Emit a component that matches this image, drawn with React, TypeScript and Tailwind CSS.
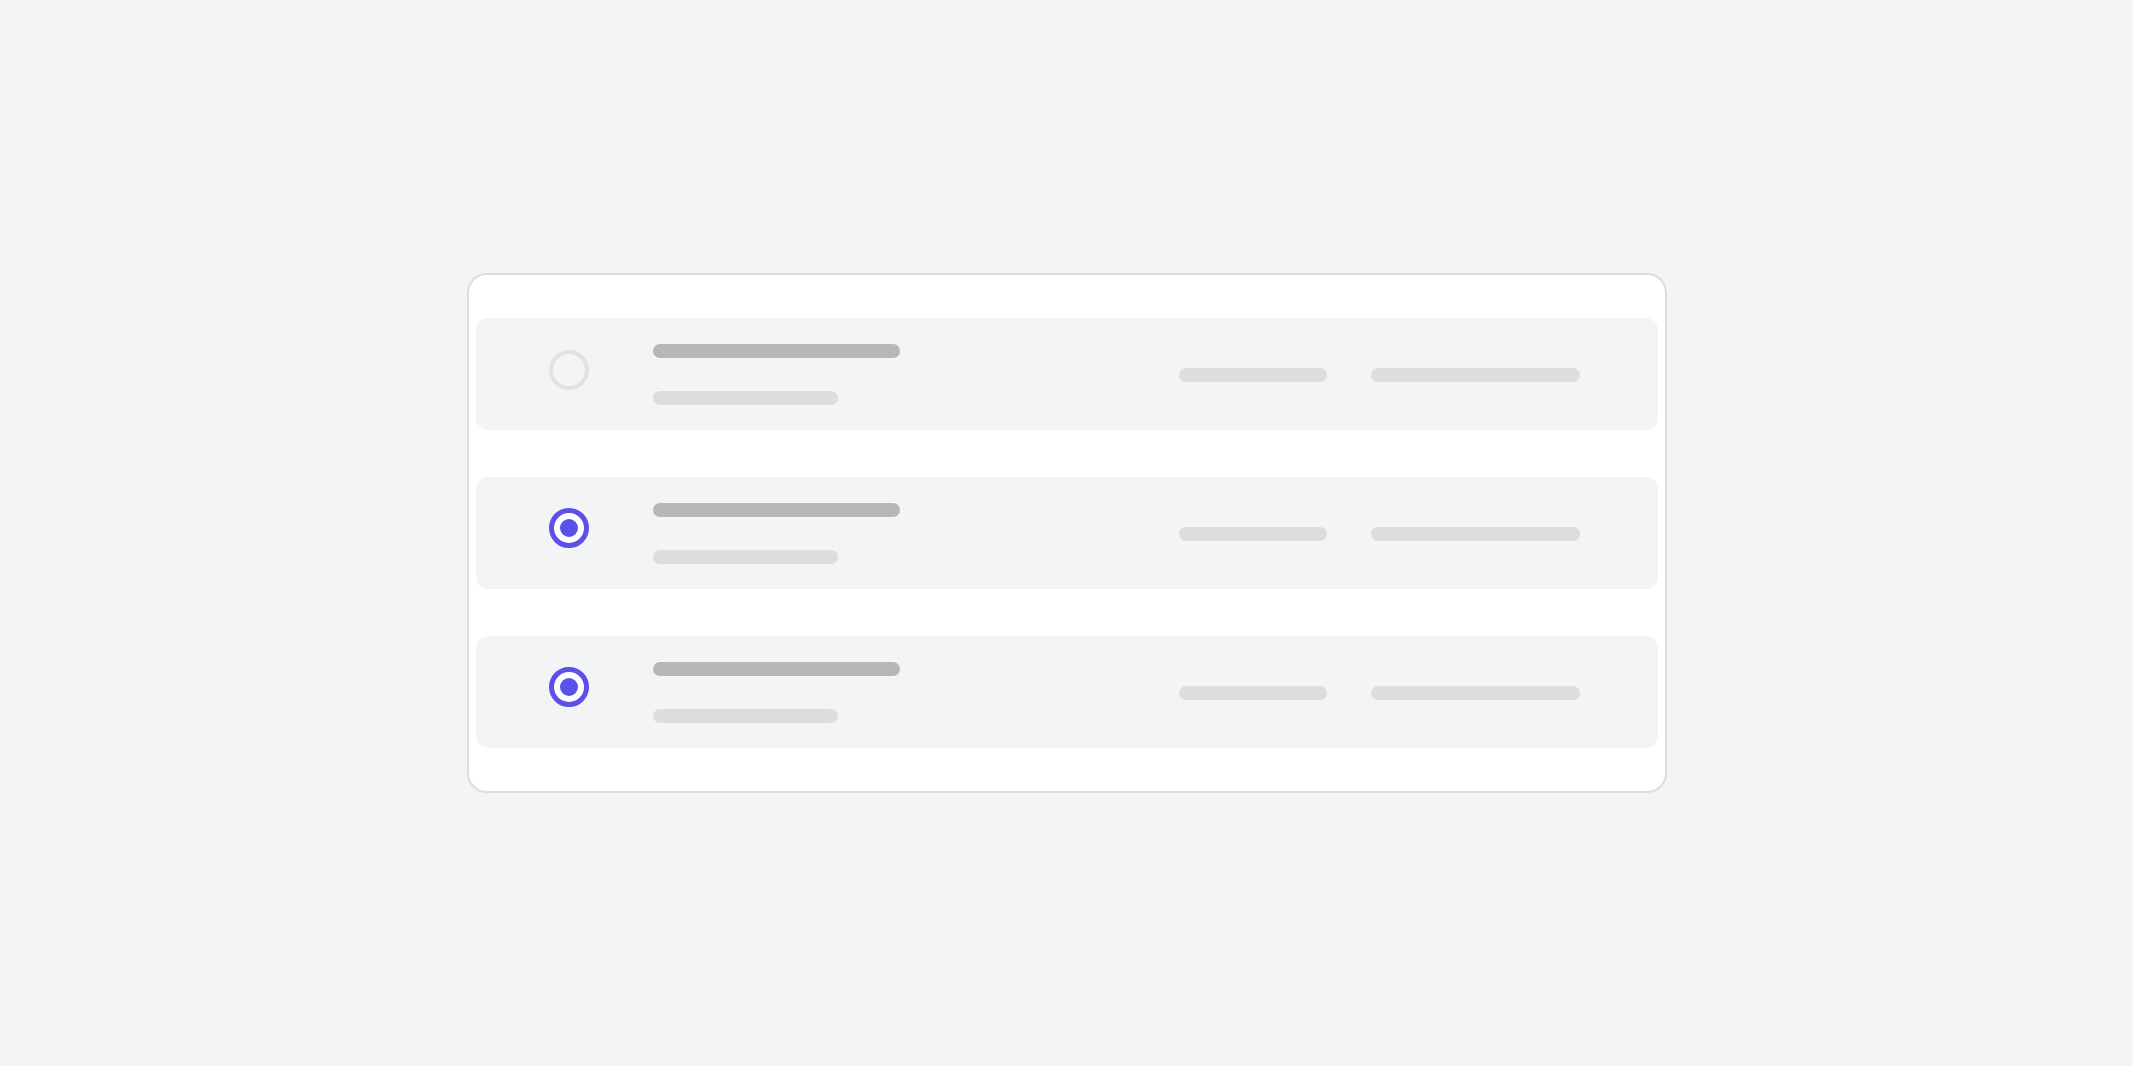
import React from "react";

function Radio({ selected }: { selected: boolean }) {
  if (!selected) {
    return <div className="w-10 h-10 rounded-full border-[4px] border-[#e1e2e3] shrink-0 mt-[32px]" />;
  }
  return (
    <div className="w-10 h-10 rounded-full border-[5px] border-[#5b51e8] shrink-0 mt-[31px] flex items-center justify-center bg-white">
      <div className="w-[18px] h-[18px] rounded-full bg-[#5b51e8]" />
    </div>
  );
}

function Row({ selected }: { selected: boolean }) {
  return (
    <div className="h-[112px] rounded-[12px] bg-[#f3f4f5] flex items-start">
      <div className="ml-[73px]">
        <Radio selected={selected} />
      </div>
      <div className="ml-[64px] flex flex-col pt-[26px]">
        <div className="w-[247px] h-[14px] rounded-full bg-[#b7b7b7]" />
        <div className="w-[185px] h-[14px] rounded-full bg-[#dcdddd] mt-[33px]" />
      </div>
      <div className="ml-auto mr-[78px] mt-[50px] flex items-center gap-[44px]">
        <div className="w-[148px] h-[14px] rounded-full bg-[#dcdddd]" />
        <div className="w-[209px] h-[14px] rounded-full bg-[#dcdddd]" />
      </div>
    </div>
  );
}

export default function App() {
  return (
    <div className="w-full h-[1066px] bg-[#f3f4f6] flex items-center justify-center">
      <div className="w-[1200px] h-[520px] bg-white border-2 border-[#dcdddd] rounded-[20px] px-[7px] py-[43px] flex flex-col gap-[47px]">
        <Row selected={false} />
        <Row selected={true} />
        <Row selected={true} />
      </div>
    </div>
  );
}
